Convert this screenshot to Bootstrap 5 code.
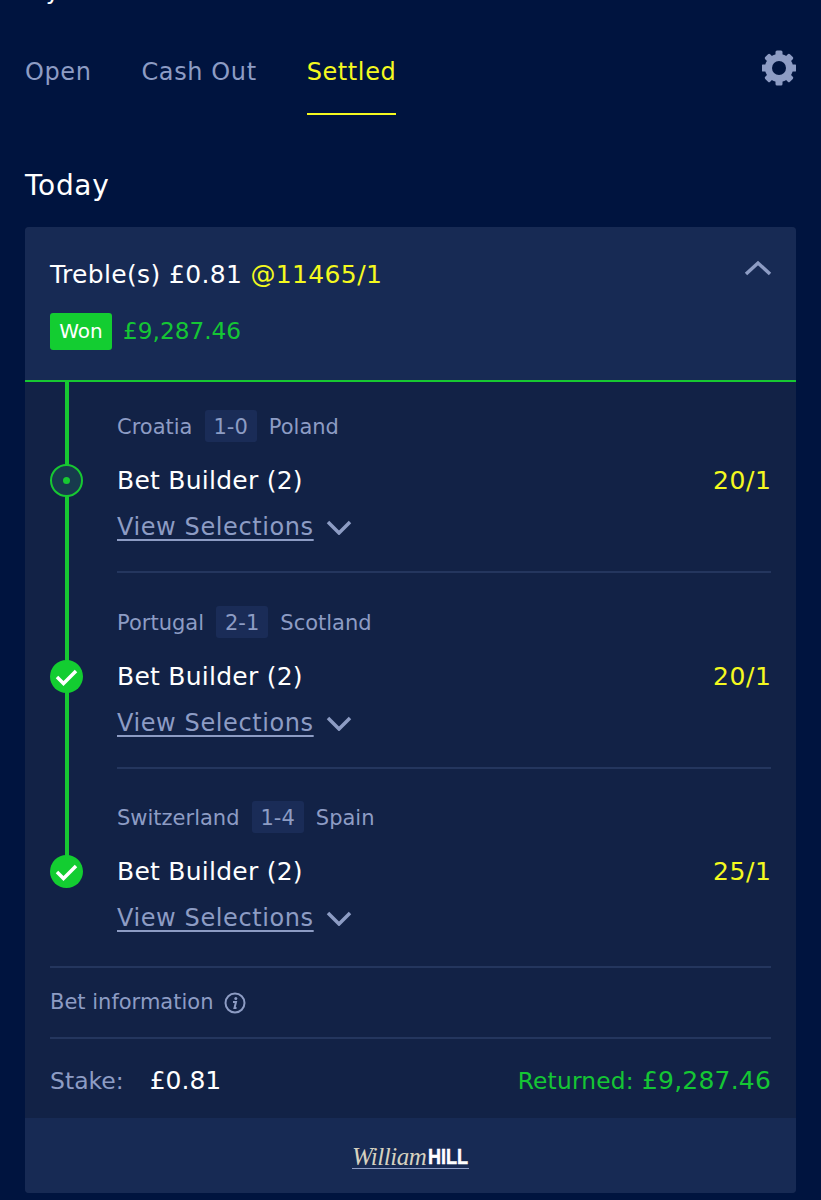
<!DOCTYPE html>
<html lang="en">
<head>
  <meta charset="UTF-8">
  <title>My Bets</title>
  <link href="https://cdn.jsdelivr.net/npm/bootstrap@5.3.0/dist/css/bootstrap.min.css" rel="stylesheet">
  <style>
    body {
      background-color: #00143f;
      font-family: "DejaVu Sans", Verdana, sans-serif;
      color: #fff;
      height: 1200px;
      overflow: hidden;
    }
    .page-title {
      height: 4px;
      overflow: hidden;
      font-size: 24px;
      line-height: 24px;
      padding-left: 25px;
    }
    .page-title span { display: block; margin-top: -21px; }
    .tabs-bar { padding: 0 25px; height: 111px; }
    .tab-link {
      font-size: 24px;
      line-height: 30px;
      color: #8d9cc4;
      text-decoration: none;
      padding-top: 53px;
      height: 111px;
      margin-right: 50px;
      letter-spacing: .6px;
    }
    .tab-link.is-active { color: #f4f91f; border-bottom: 2px solid #f4f91f; }
    .gear-icon { margin-top: 46px; }
    .day-title { font-size: 28px; line-height: 34px; margin: 54px 25px 24px; font-weight: 400; letter-spacing: .7px; }
    .bet-card { margin: 0 25px; background: #122246; border-radius: 4px; overflow: hidden; }
    .bet-head {
      background: #172a54;
      border-bottom: 2px solid #17c832;
      height: 155px;
      padding: 33px 25px 0;
    }
    .bet-title { font-size: 25px; line-height: 30px; letter-spacing: .35px; }
    .odds-txt { color: #f4f91f; }
    .won-tag {
      background: #13cd31;
      border-radius: 3px;
      font-size: 20px;
      line-height: 37px;
      width: 62px;
      text-align: center;
    }
    .won-row { margin-top: 23px; }
    .won-amt { font-size: 23.200px; color: #15c634; margin-left: 11px; }
    .chevron-up { margin: 0 -1px 0 0; }
    .legs-wrap { padding: 0 25px; }
    .leg { height: 195.5px; position: relative; padding-left: 67px; }
    .leg:last-child { height: 193px; }
    .leg-line { position: absolute; left: 15px; top: 0; width: 4px; height: 100%; background: #17c832; }
    .leg:last-child .leg-line { height: 100px; }
    .leg-marker {
      position: absolute;
      left: 0;
      top: 82px;
      width: 33px;
      height: 33px;
    }
    .leg-inner { height: 191px; border-bottom: 2px solid #24365e; padding-top: 28px; }
    .leg:last-child .leg-inner { border-bottom: 0; }
    .match-row { font-size: 21px; line-height: 32px; color: #8d9cc4; height: 32px; }
    .score-box {
      background: #1a2c57;
      border-radius: 3px;
      margin: 0 12px;
      padding: 0 9px;
      display: inline-block;
      height: 32px;
      line-height: 35px;
    }
    .pick-row { font-size: 25px; line-height: 30px; margin-top: 24px; letter-spacing: .25px; }
    .pick-row .odds-txt { letter-spacing: .6px; margin-right: -.6px; }
    .view-row { font-size: 24px; line-height: 30px; color: #8d9cc4; margin-top: 16px; letter-spacing: .6px; }
    .view-row a { color: inherit; text-underline-offset: 4px; text-decoration-thickness: 2px; }
    .view-row svg { margin-left: 12px; }
    .info-row {
      margin: 0 25px;
      border-top: 2px solid #24365e;
      border-bottom: 2px solid #24365e;
      height: 73px;
      font-size: 21px;
      color: #8d9cc4;
      gap: 11px;
    }
    .stake-row { margin: 0 25px; height: 79px; font-size: 25px; padding-top: 4px; }
    .stake-lbl { color: #8d9cc4; font-size: 23.500px; margin-right: 26px; }
    .returned-txt { color: #15c634; letter-spacing: .2px; }
    .returned-lbl { font-size: 23.300px; }
    .bet-foot { background: #172a54; height: 75px; padding-top: 3px; }
    .logo-script {
      font-family: "Liberation Serif", serif;
      font-style: italic;
      font-size: 25px;
      color: #d6d1bf;
      letter-spacing: -0.5px;
    }
    .logo-bold {
      font-family: "Liberation Sans", sans-serif;
      font-weight: 700;
      font-size: 22px;
      color: #fff;
      -webkit-text-stroke: 0.5px #fff;
      transform: scaleX(.82);
      transform-origin: left center;
      margin-right: -8px;
      margin-left: 2px;
    }
    .logo-wrap { border-bottom: 1px solid #8d9cc4; line-height: 22px; }
  </style>
</head>
<body>

<div class="page-title"><span>My Bets</span></div>

<div class="tabs-bar d-flex justify-content-between">
  <div class="d-flex">
    <a class="tab-link" href="#">Open</a>
    <a class="tab-link" href="#">Cash Out</a>
    <a class="tab-link is-active" href="#">Settled</a>
  </div>
  <svg class="gear-icon" width="34" height="36" viewBox="-17 -18 34 36" fill="#8d9cc4">
    <g>
      <rect x="-3.5" y="-17.5" width="7" height="35" rx="1.5"/>
      <rect x="-3.5" y="-17.5" width="7" height="35" rx="1.5" transform="rotate(45)"/>
      <rect x="-3.5" y="-17.5" width="7" height="35" rx="1.5" transform="rotate(90)"/>
      <rect x="-3.5" y="-17.5" width="7" height="35" rx="1.5" transform="rotate(135)"/>
    </g>
    <circle r="14"/>
    <circle r="7" fill="#00143f"/>
  </svg>
</div>

<h2 class="day-title">Today</h2>

<div class="bet-card">
  <div class="bet-head">
    <div class="d-flex justify-content-between align-items-start">
      <div class="bet-title">Treble(s) £0.81 <span class="odds-txt">@11465/1</span></div>
      <svg class="chevron-up" width="28" height="16" viewBox="0 0 28 16" fill="none" stroke="#8d9cc4" stroke-width="3.500"><path d="M2 14 14 3l12 11"/></svg>
    </div>
    <div class="won-row d-flex align-items-center">
      <div class="won-tag">Won</div>
      <div class="won-amt">£9,287.46</div>
    </div>
  </div>

  <div class="legs-wrap">
    <div class="leg">
      <div class="leg-line"></div>
      <svg class="leg-marker" viewBox="0 0 33 33"><circle cx="16.5" cy="16.5" r="15.5" fill="#173a4d" stroke="#17c832" stroke-width="2"/><circle cx="16.5" cy="16.5" r="3.5" fill="#17c832"/></svg>
      <div class="leg-inner">
        <div class="match-row">Croatia<span class="score-box">1-0</span>Poland</div>
        <div class="pick-row d-flex justify-content-between"><span>Bet Builder (2)</span><span class="odds-txt">20/1</span></div>
        <div class="view-row d-flex align-items-center"><a href="#">View Selections</a>
          <svg width="26" height="16" viewBox="0 0 26 16" fill="none" stroke="#8d9cc4" stroke-width="3.500"><path d="M2 3l11 11L24 3"/></svg>
        </div>
      </div>
    </div>
    <div class="leg">
      <div class="leg-line"></div>
      <svg class="leg-marker" viewBox="0 0 33 33"><circle cx="16.5" cy="16.5" r="16.5" fill="#13cd31"/><path d="M7 17l6.500 6.500L26 11" fill="none" stroke="#fff" stroke-width="3.500"/></svg>
      <div class="leg-inner">
        <div class="match-row">Portugal<span class="score-box">2-1</span>Scotland</div>
        <div class="pick-row d-flex justify-content-between"><span>Bet Builder (2)</span><span class="odds-txt">20/1</span></div>
        <div class="view-row d-flex align-items-center"><a href="#">View Selections</a>
          <svg width="26" height="16" viewBox="0 0 26 16" fill="none" stroke="#8d9cc4" stroke-width="3.500"><path d="M2 3l11 11L24 3"/></svg>
        </div>
      </div>
    </div>
    <div class="leg">
      <div class="leg-line"></div>
      <svg class="leg-marker" viewBox="0 0 33 33"><circle cx="16.5" cy="16.5" r="16.5" fill="#13cd31"/><path d="M7 17l6.500 6.500L26 11" fill="none" stroke="#fff" stroke-width="3.500"/></svg>
      <div class="leg-inner">
        <div class="match-row">Switzerland<span class="score-box">1-4</span>Spain</div>
        <div class="pick-row d-flex justify-content-between"><span>Bet Builder (2)</span><span class="odds-txt">25/1</span></div>
        <div class="view-row d-flex align-items-center"><a href="#">View Selections</a>
          <svg width="26" height="16" viewBox="0 0 26 16" fill="none" stroke="#8d9cc4" stroke-width="3.500"><path d="M2 3l11 11L24 3"/></svg>
        </div>
      </div>
    </div>
  </div>

  <div class="info-row d-flex align-items-center">
    <span>Bet information</span>
    <svg width="22" height="22" viewBox="0 0 22 22"><circle cx="11" cy="11" r="9.500" fill="none" stroke="#8d9cc4" stroke-width="2"/><circle cx="11.800" cy="6.500" r="1.500" fill="#8d9cc4"/><path d="M9 10h3l-1.500 6h2" fill="none" stroke="#8d9cc4" stroke-width="2"/></svg>
  </div>

  <div class="stake-row d-flex justify-content-between align-items-center">
    <div><span class="stake-lbl">Stake:</span><span>£0.81</span></div>
    <div class="returned-txt"><span class="returned-lbl">Returned:</span> £9,287.46</div>
  </div>

  <div class="bet-foot d-flex justify-content-center align-items-center">
    <div class="logo-wrap d-flex align-items-center"><span class="logo-script">William</span><span class="logo-bold">HILL</span></div>
  </div>
</div>

</body>
</html>
